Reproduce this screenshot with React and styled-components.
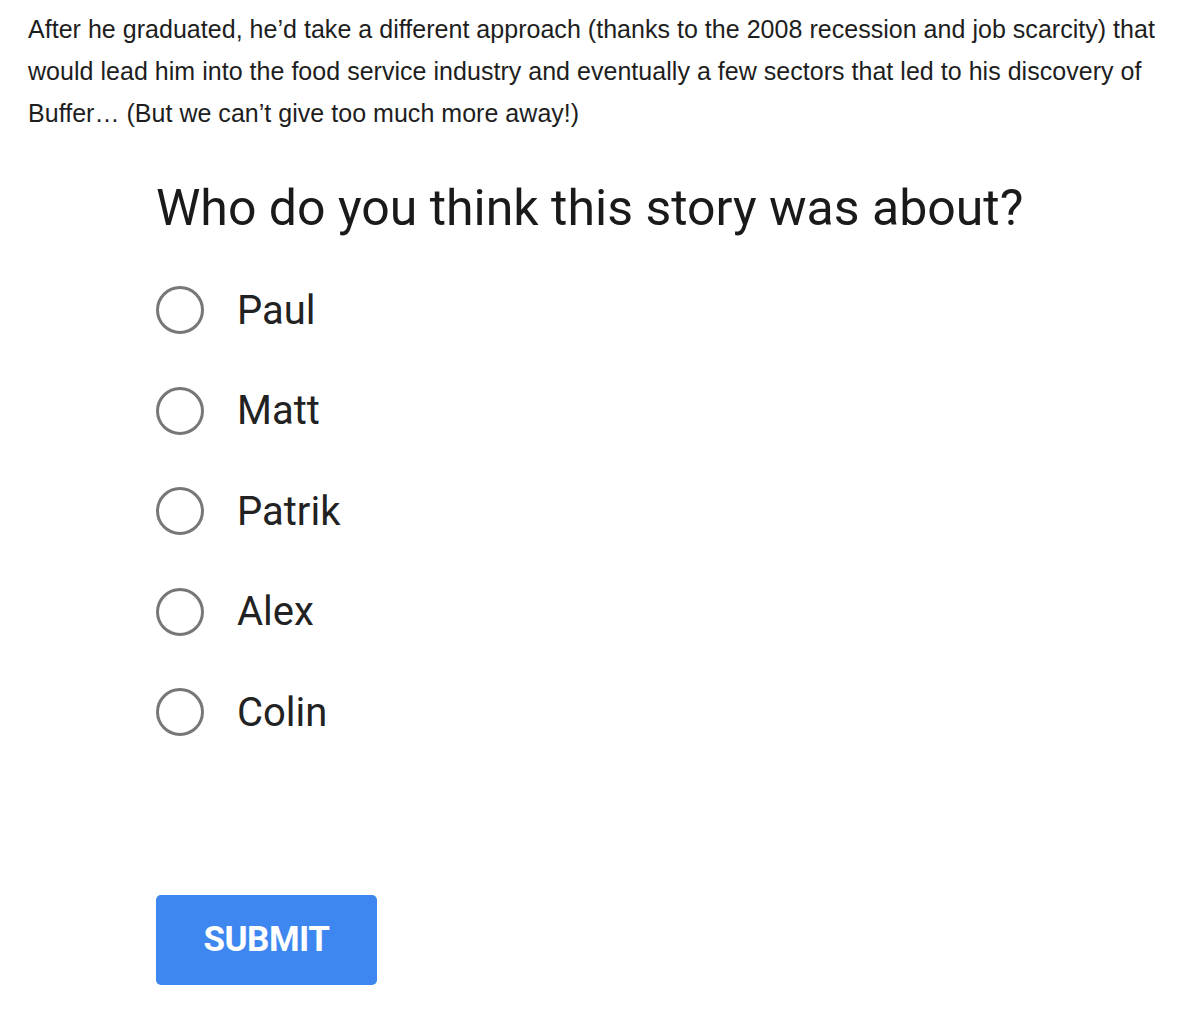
import React, { useState } from "react";
import styled, { createGlobalStyle } from "styled-components";

const GlobalStyle = createGlobalStyle`
  body {
    margin: 0;
    background: #fff;
  }
`;

const Page = styled.div`
  width: 1192px;
  padding: 8px 0 0 28px;
  box-sizing: border-box;
`;

const Intro = styled.p`
  margin: 0;
  max-width: 1142px;
  font-family: "Liberation Sans", Arial, sans-serif;
  font-size: 25px;
  letter-spacing: 0.03px;
  line-height: 42px;
  color: #1e1e1e;
`;

const Quiz = styled.form`
  display: flex;
  flex-direction: column;
  padding: 44px 0 0 128px;
  font-family: Roboto, "Noto Sans", sans-serif;
`;

const Question = styled.h2`
  margin: 0 0 22px;
  font-size: 50px;
  font-weight: 400;
  line-height: 60px;
  color: #1a1a1a;
`;

const Options = styled.div`
  display: flex;
  flex-direction: column;
`;

const Option = styled.label`
  display: flex;
  align-items: center;
  height: 100.5px;
  gap: 33px;
  cursor: pointer;
  font-size: 40px;
  color: #222;
`;

const Radio = styled.span`
  width: 48px;
  height: 48px;
  box-sizing: border-box;
  border-radius: 50%;
  border: 3px solid ${(p) => (p.checked ? "#4285f4" : "#777")};
  display: flex;
  align-items: center;
  justify-content: center;
  flex-shrink: 0;

  &::after {
    content: "";
    width: 24px;
    height: 24px;
    border-radius: 50%;
    background: #4285f4;
    display: ${(p) => (p.checked ? "block" : "none")};
  }
`;

const HiddenInput = styled.input`
  display: none;
`;

const SubmitButton = styled.button`
  margin-top: 132px;
  width: 221px;
  height: 90px;
  border: none;
  border-radius: 5px;
  background: #3e87f0;
  color: #fff;
  font-family: Roboto, "Noto Sans", sans-serif;
  font-size: 35px;
  font-weight: 700;
  letter-spacing: -0.5px;
  cursor: pointer;
  align-self: flex-start;
`;

const names = ["Paul", "Matt", "Patrik", "Alex", "Colin"];

export default function App() {
  const [picked, setPicked] = useState(null);
  return (
    <Page>
      <GlobalStyle />
      <Intro>
        After he graduated, he’d take a different approach (thanks to the 2008
        recession and job scarcity) that would lead him into the food service
        industry and eventually a few sectors that led to his discovery of
        Buffer… (But we can’t give too much more away!)
      </Intro>
      <Quiz onSubmit={(e) => e.preventDefault()}>
        <Question>Who do you think this story was about?</Question>
        <Options>
          {names.map((n) => (
            <Option key={n}>
              <HiddenInput
                type="radio"
                name="story"
                checked={picked === n}
                onChange={() => setPicked(n)}
              />
              <Radio checked={picked === n} />
              {n}
            </Option>
          ))}
        </Options>
        <SubmitButton type="submit">SUBMIT</SubmitButton>
      </Quiz>
    </Page>
  );
}
